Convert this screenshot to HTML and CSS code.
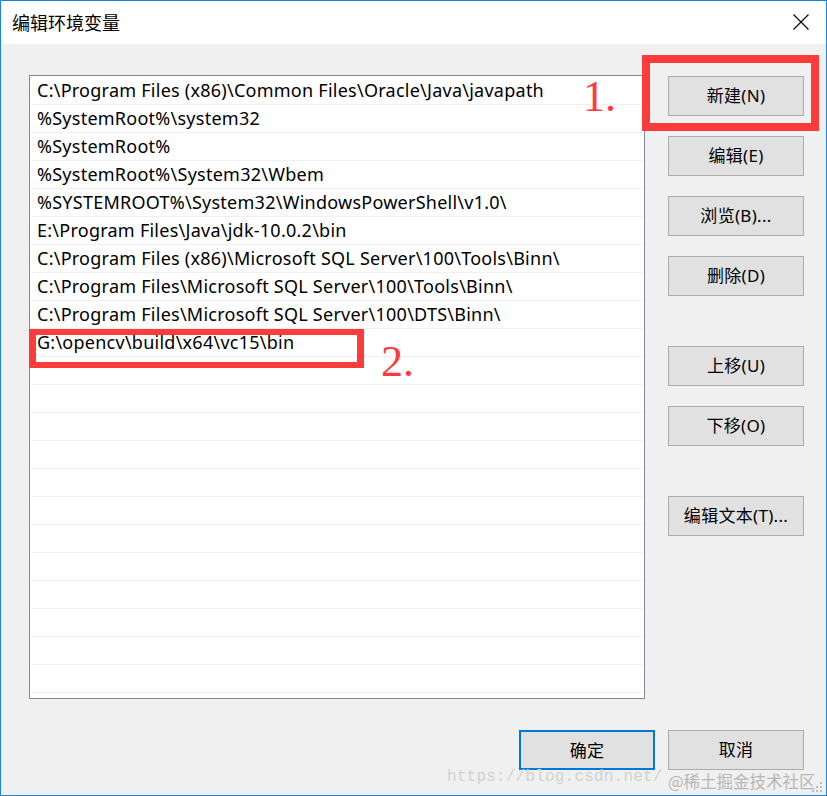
FILE: index.html
```html
<!DOCTYPE html>
<html lang="zh-CN">
<head>
<meta charset="utf-8">
<title>编辑环境变量</title>
<link rel="stylesheet" href="styles.css">
</head>
<body>
<div class="window">
  <div class="titlebar">
    <span class="title">编辑环境变量</span>
    <svg class="close" width="16" height="16" viewBox="0 0 16 16"><path d="M0.5 0.5L15.5 15.5M15.5 0.5L0.5 15.5" stroke="#000" stroke-width="1.1" fill="none"/></svg>
  </div>
  <div class="body">
    <div class="main">
      <div class="list">
        <div class="row"><span class="path">C:\Program Files (x86)\Common Files\Oracle\Java\javapath</span></div>
        <div class="row"><span class="path">%SystemRoot%\system32</span></div>
        <div class="row"><span class="path">%SystemRoot%</span></div>
        <div class="row"><span class="path">%SystemRoot%\System32\Wbem</span></div>
        <div class="row"><span class="path">%SYSTEMROOT%\System32\WindowsPowerShell\v1.0\</span></div>
        <div class="row"><span class="path">E:\Program Files\Java\jdk-10.0.2\bin</span></div>
        <div class="row"><span class="path">C:\Program Files (x86)\Microsoft SQL Server\100\Tools\Binn\</span></div>
        <div class="row"><span class="path">C:\Program Files\Microsoft SQL Server\100\Tools\Binn\</span></div>
        <div class="row"><span class="path">C:\Program Files\Microsoft SQL Server\100\DTS\Binn\</span></div>
        <div class="row"><span class="path">G:\opencv\build\x64\vc15\bin</span></div>
        <div class="row"></div><div class="row"></div><div class="row"></div><div class="row"></div>
        <div class="row"></div><div class="row"></div><div class="row"></div><div class="row"></div>
        <div class="row"></div><div class="row"></div><div class="row"></div><div class="row"></div>
      </div>
      <div class="side">
        <div class="group">
          <button class="btn">新建(N)</button>
          <button class="btn">编辑(E)</button>
          <button class="btn">浏览(B)...</button>
          <button class="btn">删除(D)</button>
        </div>
        <div class="group">
          <button class="btn">上移(U)</button>
          <button class="btn">下移(O)</button>
        </div>
        <div class="group">
          <button class="btn">编辑文本(T)...</button>
        </div>
      </div>
    </div>
    <div class="footer">
      <button class="btn primary">确定</button>
      <button class="btn">取消</button>
    </div>
  </div>

  <div class="mark mark-box1"></div>
  <div class="mark mark-box2"></div>
  <span class="mark-num num1">1.</span>
  <span class="mark-num num2">2.</span>
  <span class="wm-url">https://blog.csdn.net/</span>
  <span class="wm-juejin">@稀土掘金技术社区</span>
  <svg class="grip" width="12" height="12" viewBox="0 0 12 12">
    <rect x="8" y="0" width="2" height="2" fill="#bdbdbd"/>
    <rect x="4" y="4" width="2" height="2" fill="#bdbdbd"/>
    <rect x="8" y="4" width="2" height="2" fill="#bdbdbd"/>
    <rect x="0" y="8" width="2" height="2" fill="#bdbdbd"/>
    <rect x="4" y="8" width="2" height="2" fill="#bdbdbd"/>
    <rect x="8" y="8" width="2" height="2" fill="#bdbdbd"/>
  </svg>
</div>
</body>
</html>
```
FILE: styles.css
```css
* { box-sizing: border-box; }
html, body { margin: 0; padding: 0; }
body {
  font-family: "Noto Sans", "Noto Sans CJK SC", sans-serif;
  font-size: 17px;
  color: #000;
  background: #f0f0f0;
}
.window {
  position: relative;
  width: 827px;
  height: 796px;
  border: 1px solid #1883d7;
  background: #f0f0f0;
  overflow: hidden;
}
.titlebar {
  height: 43px;
  background: #fff;
  display: flex;
  align-items: center;
  justify-content: space-between;
  padding: 0 17px 2px 11px;
}
.title {
  font-family: "Noto Sans CJK SC", sans-serif;
  font-size: 18px;
  line-height: 20px;
}
.close { display: block; margin-top: 1px; }
.body {
  padding: 31px 0 0 28px;
}
.main {
  display: flex;
  align-items: flex-start;
}
.list {
  width: 616px;
  height: 624px;
  border: 1px solid #828790;
  background: #fff;
  padding-top: 1px;
  overflow: hidden;
}
.row {
  height: 28px;
  margin: 0 1px;
  border-bottom: 1px solid #f0f0f0;
  padding-left: 6px;
  line-height: 27px;
  white-space: nowrap;
  font-size: 18px;
  letter-spacing: 0.25px;
}
.side {
  margin-left: 23px;
  padding-top: 1px;
  display: flex;
  flex-direction: column;
  gap: 50px;
}
.group {
  display: flex;
  flex-direction: column;
  gap: 20px;
}
.btn {
  width: 136px;
  height: 40px;
  border: 1px solid #adadad;
  background: #e1e1e1;
  font-family: "Noto Sans", "Noto Sans CJK SC", sans-serif;
  font-size: 17px;
  letter-spacing: 0.3px;
  color: #000;
  padding: 0;
  margin: 0;
  line-height: 38px;
}
.btn.primary {
  border: 2px solid #0078d7;
}
.footer {
  margin-top: 31px;
  display: flex;
  justify-content: flex-end;
  gap: 13px;
  padding-right: 22px;
}
.mark {
  position: absolute;
  border: 8px solid #fc3b3b;
}
.mark-box1 { left: 641px; top: 54px; width: 177px; height: 76px; }
.mark-box2 { left: 28px; top: 328px; width: 335px; height: 39px; border-width: 6px 7px; }
.mark-num {
  position: absolute;
  font-family: "Liberation Serif", serif;
  font-size: 44px;
  line-height: 44px;
  color: #fc3b3b;
}
.num1 { left: 582px; top: 74px; }
.num2 { left: 380px; top: 339px; }
.wm-url {
  position: absolute;
  left: 446px;
  top: 768px;
  font-family: "Liberation Mono", monospace;
  font-size: 16px;
  line-height: 16px;
  letter-spacing: 0.2px;
  color: #d2d2cd;
}
.wm-juejin {
  position: absolute;
  left: 667px;
  top: 771px;
  font-family: "Noto Sans CJK SC", sans-serif;
  font-size: 16.5px;
  line-height: 18px;
  color: #b7b7b7;
}
.grip {
  position: absolute;
  right: 2px;
  bottom: 1px;
}
```
